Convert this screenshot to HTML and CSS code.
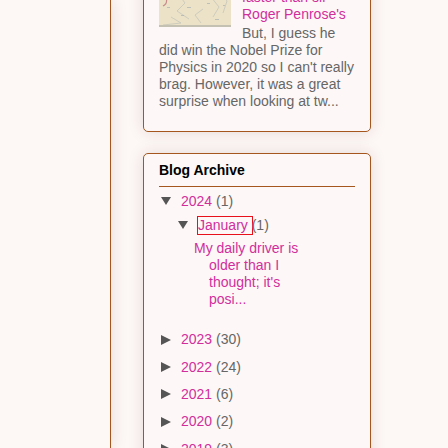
FILE: index.html
```html
<!DOCTYPE html>
<html lang="en">
<head>
<meta charset="utf-8">
<title>Blog</title>
<link rel="stylesheet" href="styles.css">
</head>
<body>
<div class="page">
  <aside class="sidebar"></aside>
  <main class="column">
    <section class="card popular">
      <div class="thumb">
        <svg width="72" height="38" viewBox="0 0 72 38">
          <rect width="72" height="38" fill="#ebe2c8"/>
          <g stroke="#b9bcb4" stroke-width="0.7" fill="none" opacity="0.8">
            <path d="M8 4 L20 6 L26 14 L18 22 L30 30"/>
            <path d="M34 2 L40 10 L52 8 L60 18 L54 28"/>
            <path d="M44 20 L36 26 L42 34"/>
            <path d="M62 4 L68 12 L64 24"/>
            <path d="M12 28 L22 34 L4 36"/>
          </g>
          <g fill="#aab2b4" opacity="0.7">
            <rect x="14" y="10" width="3" height="1"/><rect x="28" y="18" width="4" height="1"/>
            <rect x="48" y="14" width="3" height="1"/><rect x="56" y="30" width="4" height="1"/>
            <rect x="38" y="4" width="2" height="1"/><rect x="22" y="26" width="3" height="1"/>
            <rect x="64" y="16" width="2" height="1"/><rect x="8" y="18" width="3" height="1"/>
          </g>
          <path d="M4 6 A6 6 0 0 1 4 17" stroke="#c98a8a" stroke-width="1.2" fill="none"/>
          <rect y="36" width="72" height="2" fill="#c4c0b2"/>
        </svg>
      </div>
      <div class="post-title"><a href="#">faster than sir Roger Penrose's</a></div>
      <div class="snippet">But, I guess he did win the Nobel Prize for Physics in 2020 so I can't really brag. However, it was a great surprise when looking at tw...</div>
    </section>

    <section class="card archive">
      <h2 class="archive-title">Blog Archive</h2>
      <div class="archive-list">
        <div class="year">
          <div class="row">
            <span class="zippy"><svg width="10" height="10" viewBox="0 0 10 10"><polygon points="0,1 10,1 5,9" fill="#555"/></svg></span><a href="#">2024 </a><span class="count">(1)</span>
          </div>
          <div class="month">
            <div class="row">
              <span class="zippy"><svg width="10" height="10" viewBox="0 0 10 10"><polygon points="0,1 10,1 5,9" fill="#555"/></svg></span><a class="focused" href="#">January </a><span class="count">(1)</span>
            </div>
            <ul class="posts">
              <li><a href="#">My daily driver is older than I thought; it's posi...</a></li>
            </ul>
          </div>
        </div>
        <div class="year">
          <div class="row"><span class="zippy"><svg width="10" height="10" viewBox="0 0 10 10"><polygon points="0,0 10,5 0,10" fill="#555"/></svg></span><a href="#">2023 </a><span class="count">(30)</span></div>
        </div>
        <div class="year">
          <div class="row"><span class="zippy"><svg width="10" height="10" viewBox="0 0 10 10"><polygon points="0,0 10,5 0,10" fill="#555"/></svg></span><a href="#">2022 </a><span class="count">(24)</span></div>
        </div>
        <div class="year">
          <div class="row"><span class="zippy"><svg width="10" height="10" viewBox="0 0 10 10"><polygon points="0,0 10,5 0,10" fill="#555"/></svg></span><a href="#">2021 </a><span class="count">(6)</span></div>
        </div>
        <div class="year">
          <div class="row"><span class="zippy"><svg width="10" height="10" viewBox="0 0 10 10"><polygon points="0,0 10,5 0,10" fill="#555"/></svg></span><a href="#">2020 </a><span class="count">(2)</span></div>
        </div>
        <div class="year">
          <div class="row"><span class="zippy"><svg width="10" height="10" viewBox="0 0 10 10"><polygon points="0,0 10,5 0,10" fill="#555"/></svg></span><a href="#">2019 </a><span class="count">(3)</span></div>
        </div>
      </div>
    </section>
  </main>
</div>
</body>
</html>
```
FILE: styles.css
```css
html, body {
  margin: 0;
  padding: 0;
  height: 100%;
  overflow: hidden;
}
body {
  background: #fdf7f6;
  font-family: "Liberation Sans", Arial, sans-serif;
  font-size: 14px;
  line-height: 17px;
  color: #666;
}
a {
  color: #d12e9c;
  text-decoration: none;
}
.page {
  display: flex;
  align-items: flex-start;
  height: 100%;
}
.sidebar {
  width: 110px;
  flex: none;
  height: 100%;
  border-right: 1px solid #a5561f;
  box-shadow: 0 0 16px rgba(70, 30, 10, 0.13);
  background: #fdf7f6;
  position: relative;
  z-index: 1;
}
.column {
  width: 228px;
  flex: none;
  margin-left: 32px;
  margin-top: -27.5px;
  display: flex;
  flex-direction: column;
  gap: 21px;
}
.card {
  background: #fdf8f7;
  border: 1px solid #a5561f;
  border-radius: 5px;
  box-shadow: 0 0 16px rgba(70, 30, 10, 0.13);
}
.popular {
  padding: 15px 15px 21px 15px;
}
.thumb {
  float: left;
  width: 72px;
  height: 38px;
  margin: 0 11px 4px 0;
}
.thumb svg {
  display: block;
}
.post-title {
  margin: 0;
}
.snippet {
  margin-top: 2px;
}
.archive {
  padding: 8px 15px 15px 15px;
  height: 400px;
}
.archive-title {
  margin: 0;
  padding: 0 0 7px 0;
  font-size: 14px;
  line-height: 17px;
  font-weight: bold;
  color: #000;
  border-bottom: 1px solid #a5561f;
}
.archive-list {
  padding-top: 1px;
}
.year {
  padding: 5.15px 0;
}
.row {
  display: flex;
  align-items: center;
  white-space: pre;
}
.zippy {
  width: 22px;
  flex: none;
  display: flex;
  align-items: center;
  padding-left: 2px;
  box-sizing: border-box;
}
.zippy svg {
  display: block;
}
.count {
  color: #666;
}
.month {
  margin-top: 7px;
  margin-left: 17px;
}
.focused {
  outline: 1px solid #e8101a;
}
.posts {
  list-style: none;
  margin: 6px 0 13.5px 18px;
  padding: 0;
  width: 116px;
}
.posts li {
  padding-left: 15px;
  text-indent: -15px;
}
```
